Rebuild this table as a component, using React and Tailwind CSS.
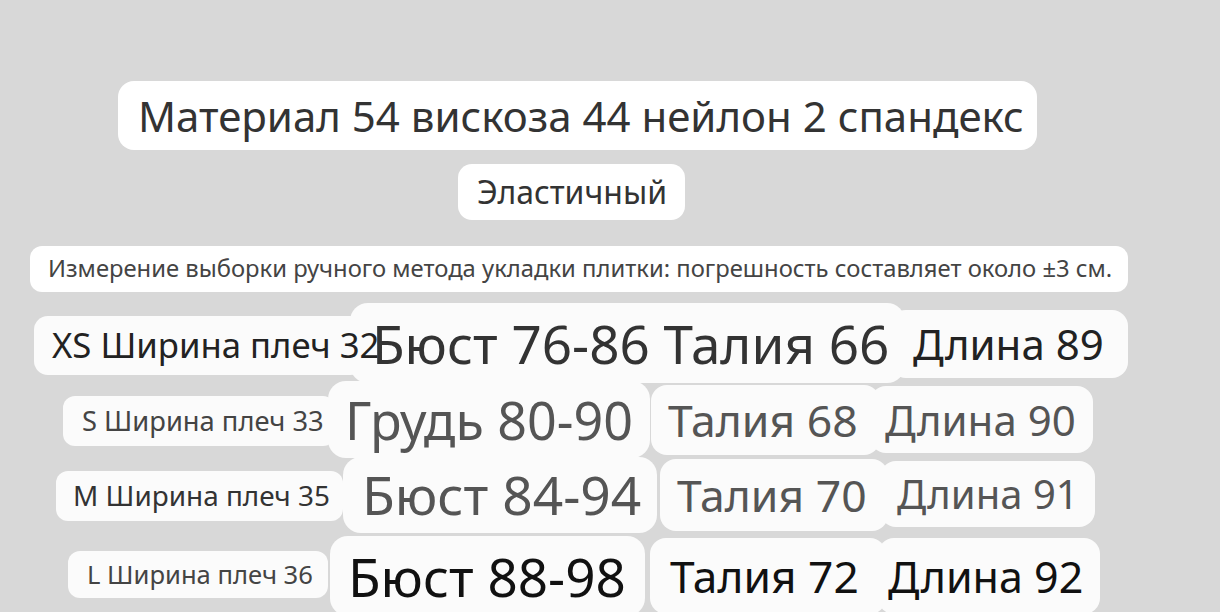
import React from "react";

const Pill = ({ className = "", textClass = "", children }) => (
    <div className={`shrink-0 flex items-center whitespace-nowrap leading-none bg-[#fbfbfb] ${className}`}>
        <span className={`relative ${textClass}`}>{children}</span>
    </div>
);

const App = () => {
    return (
        <div className="w-[1220px] h-[612px] overflow-hidden bg-[#d8d8d8] flex flex-col font-['Noto_Sans',sans-serif]">
            {/* faint fold line */}
            <div className="mt-[37px] h-[1px] bg-[#c9c9c9]" />
            <div className="h-[1px] bg-[#e0e0e0]" />

            {/* Material */}
            <div className="flex mt-[44px]">
                <Pill className="ml-[118px] w-[919px] h-[69px] rounded-[16px] pl-[20px] bg-white" textClass="text-[42px] text-[#333]">
                    Материал 54 вискоза 44 нейлон 2 спандекс
                </Pill>
            </div>

            <div className="flex mt-[14px]">
                <Pill className="ml-[458px] w-[227px] h-[56px] rounded-[14px] pl-[19px] bg-white" textClass="text-[32px] text-[#333]">
                    Эластичный
                </Pill>
            </div>

            <div className="flex mt-[26px]">
                <Pill className="ml-[30px] w-[1098px] h-[46px] rounded-[12px] pl-[18px] bg-white" textClass="text-[23.8px] text-[#444]">
                    Измерение выборки ручного метода укладки плитки: погрешность составляет около ±3 см.
                </Pill>
            </div>

            {/* XS */}
            <div className="flex items-start h-[80px] mt-[11px]">
                <Pill className="ml-[34px] mt-[13px] w-[330px] h-[59px] rounded-[14px] pl-[18px]" textClass="text-[34.7px] text-[#222]">
                    XS Ширина плеч 32
                </Pill>
                <Pill className="ml-[-14px] w-[555px] h-[80px] rounded-[18px] pl-[22px]" textClass="text-[53px] text-[#333]">
                    Бюст 76-86 Талия 66
                </Pill>
                <Pill className="ml-[-15px] mt-[7px] w-[238px] h-[68px] rounded-[16px] pl-[23px]" textClass="text-[42px] text-[#222]">
                    Длина 89
                </Pill>
            </div>

            {/* S */}
            <div className="flex items-start h-[77px] mt-[-2px]">
                <Pill className="ml-[63px] mt-[15px] w-[272px] h-[50px] rounded-[12px] pl-[19px]" textClass="text-[27.3px] text-[#444]">
                    S Ширина плеч 33
                </Pill>
                <Pill className="ml-[-7px] w-[322px] h-[77px] rounded-[18px] pl-[17px]" textClass="text-[52px] text-[#555]">
                    Грудь 80-90
                </Pill>
                <Pill className="ml-[1px] mt-[4px] w-[229px] h-[70px] rounded-[16px] pl-[17px]" textClass="text-[44.5px] text-[#555]">
                    Талия 68
                </Pill>
                <Pill className="ml-[-10px] mt-[5px] w-[223px] h-[67px] rounded-[16px] pl-[15px]" textClass="text-[42px] text-[#555]">
                    Длина 90
                </Pill>
            </div>

            {/* M */}
            <div className="flex items-start h-[76px] mt-[-1px]">
                <Pill className="ml-[56px] mt-[14px] w-[287px] h-[50px] rounded-[12px] pl-[17px]" textClass="text-[27.9px] text-[#333]">
                    M Ширина плеч 35
                </Pill>
                <Pill className="w-[314px] h-[76px] rounded-[18px] pl-[19px]" textClass="text-[53.3px] text-[#555]">
                    Бюст 84-94
                </Pill>
                <Pill className="ml-[3px] mt-[2px] w-[228px] h-[72px] rounded-[16px] pl-[17px]" textClass="text-[44.5px] text-[#555]">
                    Талия 70
                </Pill>
                <Pill className="ml-[-8px] mt-[4px] w-[215px] h-[66px] rounded-[16px] pl-[17px]" textClass="text-[40px] text-[#555]">
                    Длина 91
                </Pill>
            </div>

            {/* L */}
            <div className="flex items-start h-[80px] mt-[3px]">
                <Pill className="ml-[68px] mt-[15px] w-[260px] h-[47px] rounded-[12px] pl-[19px]" textClass="text-[25.6px] text-[#444]">
                    L Ширина плеч 36
                </Pill>
                <Pill className="ml-[2px] w-[315px] h-[80px] rounded-[18px] pl-[18px]" textClass="text-[53px] text-[#111]">
                    Бюст 88-98
                </Pill>
                <Pill className="ml-[5px] mt-[2px] w-[236px] h-[76px] rounded-[16px] pl-[20px]" textClass="text-[44.3px] text-[#111]">
                    Талия 72
                </Pill>
                <Pill className="ml-[-8px] mt-[2px] w-[222px] h-[76px] rounded-[16px] pl-[10px]" textClass="text-[43px] text-[#111]">
                    Длина 92
                </Pill>
            </div>
        </div>
    );
};

export default App;
